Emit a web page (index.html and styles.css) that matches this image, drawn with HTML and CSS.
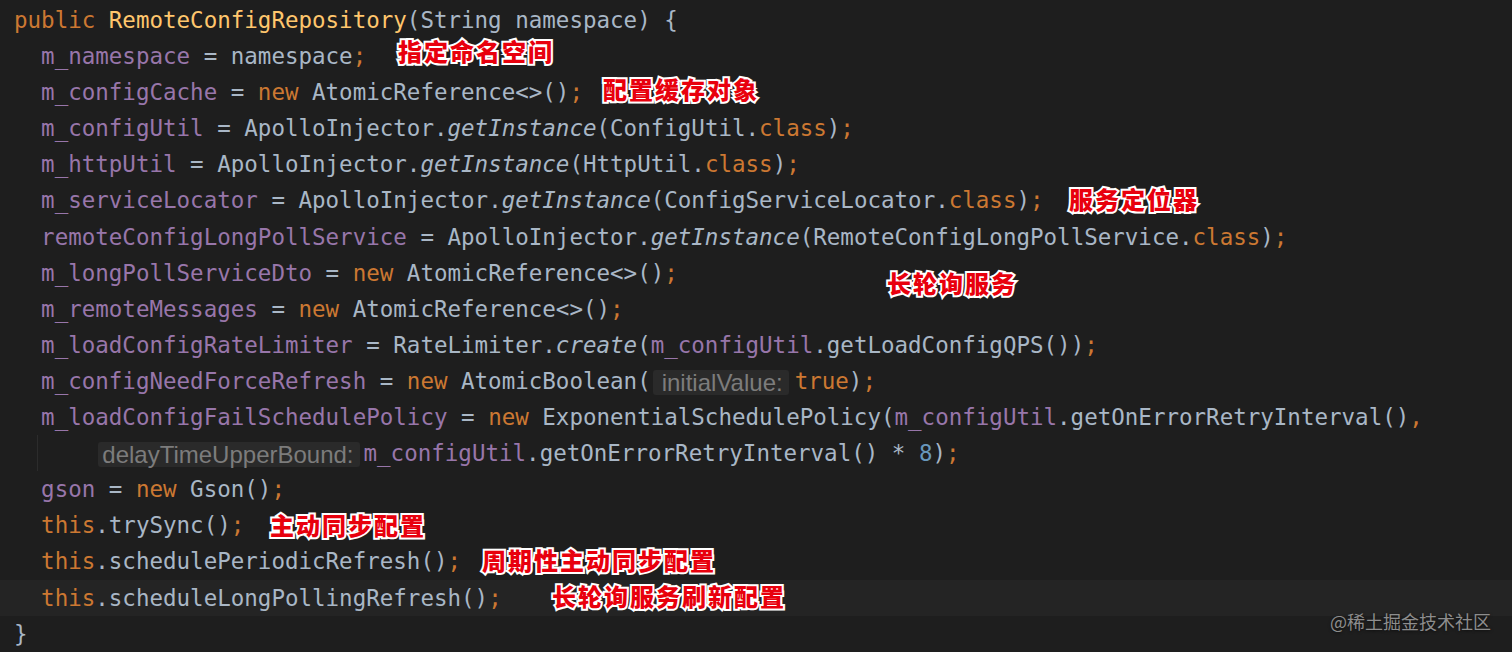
FILE: index.html
```html
<!DOCTYPE html>
<html lang="zh-CN">

<head>
    <meta charset="UTF-8">
    <meta name="viewport" content="width=device-width, initial-scale=1.0">
    <title>RemoteConfigRepository</title>
    <link rel="stylesheet" href="styles.css">
</head>

<body>
    <div class="editor">
        <div class="code">
            <div class="line"><span class="kw">public</span> <span class="fn">RemoteConfigRepository</span>(String namespace) {</div>
            <div class="line">  <span class="fld">m_namespace</span> = namespace<span class="kw">;</span></div>
            <div class="line">  <span class="fld">m_configCache</span> = <span class="kw">new</span> AtomicReference&lt;&gt;()<span class="kw">;</span></div>
            <div class="line">  <span class="fld">m_configUtil</span> = ApolloInjector.<span class="it">getInstance</span>(ConfigUtil.<span class="kw">class</span>)<span class="kw">;</span></div>
            <div class="line">  <span class="fld">m_httpUtil</span> = ApolloInjector.<span class="it">getInstance</span>(HttpUtil.<span class="kw">class</span>)<span class="kw">;</span></div>
            <div class="line">  <span class="fld">m_serviceLocator</span> = ApolloInjector.<span class="it">getInstance</span>(ConfigServiceLocator.<span class="kw">class</span>)<span class="kw">;</span></div>
            <div class="line">  <span class="fld">remoteConfigLongPollService</span> = ApolloInjector.<span class="it">getInstance</span>(RemoteConfigLongPollService.<span class="kw">class</span>)<span class="kw">;</span></div>
            <div class="line">  <span class="fld">m_longPollServiceDto</span> = <span class="kw">new</span> AtomicReference&lt;&gt;()<span class="kw">;</span></div>
            <div class="line">  <span class="fld">m_remoteMessages</span> = <span class="kw">new</span> AtomicReference&lt;&gt;()<span class="kw">;</span></div>
            <div class="line">  <span class="fld">m_loadConfigRateLimiter</span> = RateLimiter.<span class="it">create</span>(<span class="fld">m_configUtil</span>.getLoadConfigQPS())<span class="kw">;</span></div>
            <div class="line">  <span class="fld">m_configNeedForceRefresh</span> = <span class="kw">new</span> AtomicBoolean(<span class="hint hint-mid">initialValue:</span><span class="kw">true</span>)<span class="kw">;</span></div>
            <div class="line">  <span class="fld">m_loadConfigFailSchedulePolicy</span> = <span class="kw">new</span> ExponentialSchedulePolicy(<span class="fld">m_configUtil</span>.getOnErrorRetryInterval()<span class="kw">,</span></div>
            <div class="line">  <span class="guide"></span>    <span class="hint">delayTimeUpperBound:</span><span class="fld">m_configUtil</span>.getOnErrorRetryInterval() * <span class="num">8</span>)<span class="kw">;</span></div>
            <div class="line">  <span class="fld">gson</span> = <span class="kw">new</span> Gson()<span class="kw">;</span></div>
            <div class="line">  <span class="kw">this</span>.trySync()<span class="kw">;</span></div>
            <div class="line">  <span class="kw">this</span>.schedulePeriodicRefresh()<span class="kw">;</span></div>
            <div class="line current">  <span class="kw">this</span>.scheduleLongPollingRefresh()<span class="kw">;</span></div>
            <div class="line">}</div>
        </div>

        <!-- callouts drawn over the screenshot -->
        <span class="note note-namespace">指定命名空间</span>
        <span class="note note-cache">配置缓存对象</span>
        <span class="note note-locator">服务定位器</span>
        <span class="note note-longpoll">长轮询服务</span>
        <span class="note note-sync">主动同步配置</span>
        <span class="note note-periodic">周期性主动同步配置</span>
        <span class="note note-refresh">长轮询服务刷新配置</span>

        <span class="watermark">@稀土掘金技术社区</span>
    </div>
</body>

</html>
```

FILE: styles.css
```css
:root {
    --bg-color: #1e1e1e;
    --line-color: #242424;
    --text-color: #a9b7c6;
    --keyword-color: #cc7832;
    --field-color: #9876aa;
    --function-color: #ffc66d;
    --number-color: #6897bb;
    --hint-color: #7c7c7c;
    --hint-bg: #2a2a2a;
    --note-color: #e8000d;
}

* {
    box-sizing: border-box;
    margin: 0;
    padding: 0;
}

html,
body {
    height: 100%;
}

body {
    background-color: var(--bg-color);
    overflow: hidden;
}

.editor {
    position: relative;
    height: 100%;
}

.code {
    padding-top: 2px;
    font-family: 'DejaVu Sans Mono', monospace;
    font-size: 22.5px;
    color: var(--text-color);
}

.line {
    height: 36.1px;
    line-height: 36.1px;
    padding-left: 14px;
    white-space: pre;
}

.line.current {
    background-color: var(--line-color);
}

.kw {
    color: var(--keyword-color);
}

.fn {
    color: var(--function-color);
}

.fld {
    color: var(--field-color);
}

.it {
    font-style: italic;
}

.num {
    color: var(--number-color);
}

.hint {
    display: inline-block;
    height: 25px;
    line-height: 25px;
    padding: 0 6px 0 4px;
    margin: 0 4px 0 3px;
    vertical-align: middle;
    font-family: 'Liberation Sans', Arial, sans-serif;
    font-size: 24px;
    color: var(--hint-color);
    background-color: var(--hint-bg);
    border-radius: 3px;
}

.hint-mid {
    padding-left: 9px;
    margin-left: 2px;
    margin-right: 6px;
}

.guide {
    display: inline-block;
    width: 1px;
    height: 36px;
    margin-left: -4px;
    margin-right: 3px;
    vertical-align: top;
    background-color: #2c2c2c;
}

.note {
    position: absolute;
    font-family: 'Noto Sans CJK SC', sans-serif;
    font-weight: 900;
    font-size: 24px;
    line-height: 24px;
    letter-spacing: 2px;
    color: var(--note-color);
    -webkit-text-stroke: 4px #fff;
    paint-order: stroke fill;
    white-space: nowrap;
}

.note-namespace {
    left: 398px;
    top: 39px;
}

.note-cache {
    left: 603px;
    top: 77px;
}

.note-locator {
    left: 1069px;
    top: 187px;
}

.note-longpoll {
    left: 887px;
    top: 271px;
}

.note-sync {
    left: 270px;
    top: 513px;
}

.note-periodic {
    left: 482px;
    top: 548px;
}

.note-refresh {
    left: 552px;
    top: 584px;
}

.watermark {
    position: absolute;
    left: 1330px;
    top: 609px;
    font-family: 'Noto Sans CJK SC', sans-serif;
    font-size: 18px;
    line-height: 24px;
    color: #8d8d8d;
    text-shadow: 0 1px 3px rgba(0, 0, 0, 0.6);
    white-space: nowrap;
}
```
